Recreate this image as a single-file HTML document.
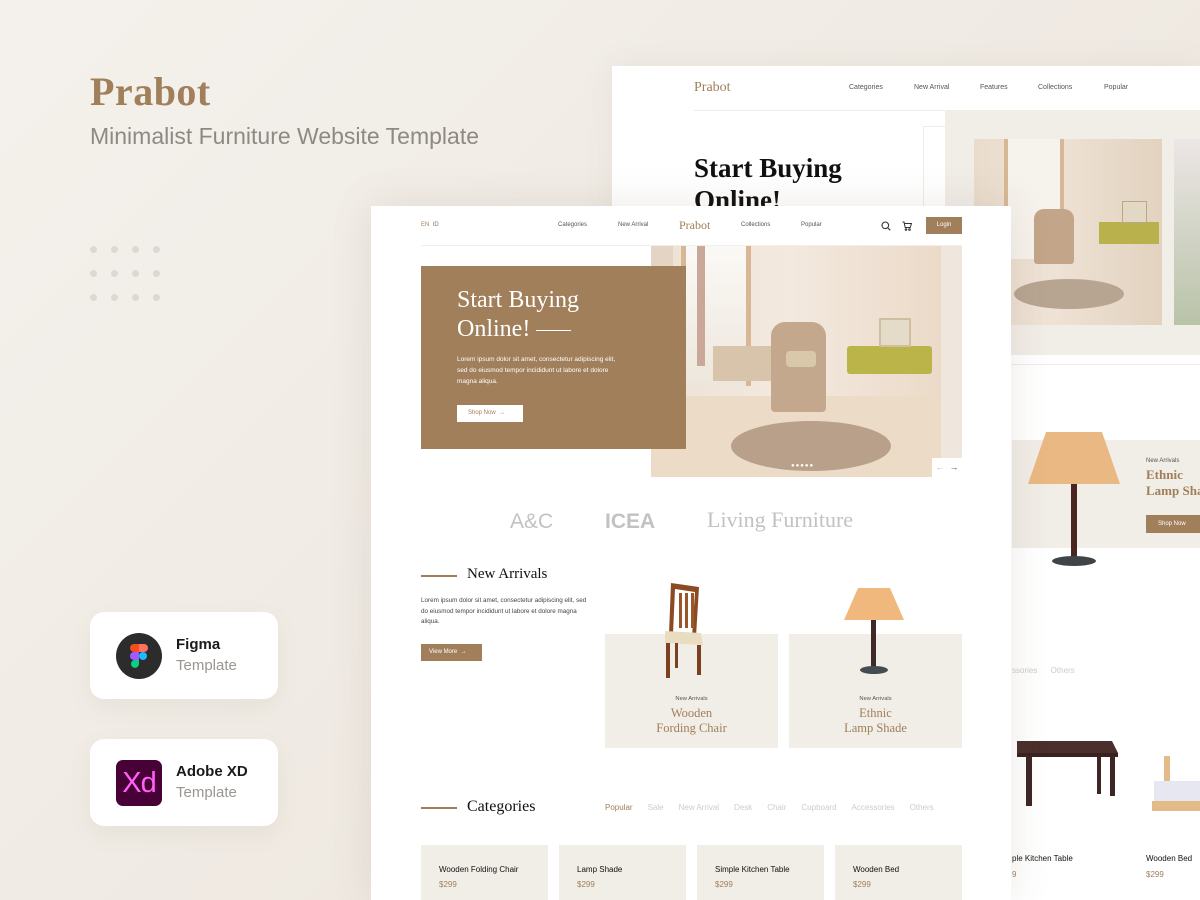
<!DOCTYPE html>
<html style="overflow:hidden;width:1200px;height:900px"><head><meta charset="utf-8"><style>
*{margin:0;padding:0;box-sizing:border-box}
body{width:1200px;height:900px;overflow:hidden;background:linear-gradient(135deg,#f4f1ec 0%,#efe9e2 60%,#ece5dc 100%);font-family:"Liberation Sans",sans-serif;position:relative}
.a{position:absolute}
.serif{font-family:"Liberation Serif",serif}
.br{color:#a07f5a}
.t{white-space:nowrap}
.dot{position:absolute;width:7px;height:7px;border-radius:50%;background:#e0d8cf}
.card{position:absolute;left:90px;width:188px;height:87px;background:#fff;border-radius:14px;box-shadow:0 8px 24px rgba(120,100,80,.08)}
.card b{position:absolute;left:86px;top:24px;font-size:15px;color:#1a1a1a}
.card span{position:absolute;left:86px;top:45px;font-size:15px;color:#9a9590}
.nav{font-size:7px;color:#555}
.tab{margin-right:15px}
</style></head><body>

<div class="a serif br t" style="left:90px;top:68px;font-size:40px;font-weight:bold;letter-spacing:.5px">Prabot</div>
<div class="a t" style="left:90px;top:123px;font-size:23px;color:#8e8983">Minimalist Furniture Website Template</div>

<div class="dot" style="left:90px;top:246px"></div><div class="dot" style="left:111px;top:246px"></div><div class="dot" style="left:132px;top:246px"></div><div class="dot" style="left:153px;top:246px"></div>
<div class="dot" style="left:90px;top:270px"></div><div class="dot" style="left:111px;top:270px"></div><div class="dot" style="left:132px;top:270px"></div><div class="dot" style="left:153px;top:270px"></div>
<div class="dot" style="left:90px;top:294px"></div><div class="dot" style="left:111px;top:294px"></div><div class="dot" style="left:132px;top:294px"></div><div class="dot" style="left:153px;top:294px"></div>

<div class="card" style="top:612px">
 <div class="a" style="left:26px;top:21px;width:46px;height:46px;border-radius:50%;background:#2c2c2c"></div>
 <svg class="a" style="left:38px;top:31px" width="22" height="27" viewBox="0 0 22 27"><path d="M6 1h5v8H6a4 4 0 010-8z" fill="#f24e1e"/><path d="M11 1h5a4 4 0 010 8h-5z" fill="#ff7262"/><path d="M6 9h5v8H6a4 4 0 010-8z" fill="#a259ff"/><circle cx="15" cy="13" r="4" fill="#1abcfe"/><path d="M6 17h5v4a4 4 0 11-5-4z" fill="#0acf83"/></svg>
 <b>Figma</b><span>Template</span>
</div>
<div class="card" style="top:739px">
 <div class="a" style="left:26px;top:21px;width:46px;height:46px;border-radius:7px;background:#470137;color:#ff61f6;font-size:29px;line-height:46px;text-align:center;letter-spacing:-1px">Xd</div>
 <b>Adobe XD</b><span>Template</span>
</div>

<!-- back page -->
<div class="a" style="left:612px;top:66px;width:588px;height:834px;background:#fff;box-shadow:0 0 30px rgba(120,100,80,.08);overflow:hidden">
 <div class="a serif br t" style="left:82px;top:14px;font-size:14px">Prabot</div>
 <div class="a nav t br" style="left:237px;top:18px">Categories</div>
 <div class="a nav t" style="left:302px;top:18px">New Arrival</div>
 <div class="a nav t" style="left:368px;top:18px">Features</div>
 <div class="a nav t" style="left:426px;top:18px">Collections</div>
 <div class="a nav t" style="left:492px;top:18px">Popular</div>
 <div class="a" style="left:82px;top:44px;width:520px;height:1px;background:#f0ece6"></div>
 <div class="a" style="left:311px;top:60px;width:30px;height:100px;border:1px solid #f0ece6"></div>
 <div class="a serif t" style="left:82px;top:86px;font-size:27px;color:#111;line-height:32px;font-weight:bold">Start Buying<br>Online!</div>
 <div class="a" style="left:333px;top:44px;width:270px;height:245px;background:#f1ede7"></div>
 <div class="a" style="left:362px;top:73px;width:188px;height:186px;background:linear-gradient(90deg,#e9dccd 0%,#efe3d6 40%,#e2d2bf 100%)">
  <div class="a" style="left:30px;top:0;width:60px;height:120px;background:#f6f2ec;border-left:4px solid #d7b896;border-right:4px solid #d7b896"></div>
  <div class="a" style="left:60px;top:70px;width:40px;height:55px;background:#c3a58a;border-radius:10px 10px 3px 3px"></div>
  <div class="a" style="left:125px;top:83px;width:60px;height:22px;background:#b9b24c"></div>
  <div class="a" style="left:148px;top:62px;width:25px;height:22px;background:#e3d8c4;border:1px solid #b8a888"></div>
  <div class="a" style="left:40px;top:140px;width:110px;height:30px;background:#b8a591;border-radius:50%"></div>
 </div>
 <div class="a" style="left:562px;top:73px;width:40px;height:186px;background:linear-gradient(#ece6e6,#b9c3a8)"></div>
 <div class="a" style="left:388px;top:298px;width:220px;height:1px;background:#f0ece6"></div>
 <div class="a" style="left:400px;top:374px;width:200px;height:108px;background:#f1ede7"></div>
 <svg class="a" style="left:414px;top:364px" width="96" height="140" viewBox="0 0 96 140"><path d="M20 2h56l18 52H2z" fill="#eab983"/><rect x="45" y="54" width="6" height="75" fill="#4a2620"/><ellipse cx="48" cy="131" rx="22" ry="5" fill="#3e4448"/></svg>
 <div class="a nav t" style="left:534px;top:392px;font-size:6px">New Arrivals</div>
 <div class="a serif br t" style="left:534px;top:401px;font-size:13px;line-height:16px;font-weight:bold">Ethnic<br>Lamp Shade</div>
 <div class="a t" style="left:534px;top:449px;width:60px;height:18px;background:#a07f5a;color:#fff;font-size:6px;line-height:18px;padding-left:12px">Shop Now</div>
 <div class="a t" style="left:400px;top:600px;font-size:8px;color:#ccc">ssories&nbsp;&nbsp;&nbsp;&nbsp;&nbsp;&nbsp;Others</div>
 <svg class="a" style="left:400px;top:670px" width="110" height="75" viewBox="0 0 110 75"><path d="M5 5h95l6 12H5z" fill="#4a2f2c"/><path d="M5 17h101v4H5z" fill="#3a2220"/><rect x="14" y="20" width="6" height="50" fill="#3e2624"/><rect x="98" y="20" width="5" height="40" fill="#3e2624"/><rect x="85" y="20" width="4" height="38" fill="#3e2624"/></svg>
 <svg class="a" style="left:540px;top:690px" width="60" height="60" viewBox="0 0 60 60"><rect x="12" y="0" width="6" height="55" fill="#e3bb88"/><path d="M2 25h58v20H2z" fill="#e6e7f1"/><rect x="0" y="45" width="60" height="10" fill="#e3bb88"/></svg>
 <div class="a t" style="left:400px;top:788px;font-size:8px;color:#111">ple Kitchen Table</div>
 <div class="a t br" style="left:400px;top:804px;font-size:8px">9</div>
 <div class="a t" style="left:534px;top:788px;font-size:8px;color:#111">Wooden Bed</div>
 <div class="a t br" style="left:534px;top:804px;font-size:8px">$299</div>
</div>

<!-- front page -->
<div class="a" style="left:371px;top:206px;width:640px;height:694px;background:#fff;box-shadow:0 0 40px rgba(100,80,60,.12);overflow:hidden">
 <div class="a t" style="left:50px;top:16px;font-size:6px;color:#777"><span class="br">EN</span>&nbsp; ID</div>
 <div class="a nav t br" style="left:187px;top:16px;font-size:6px">Categories</div>
 <div class="a nav t" style="left:247px;top:16px;font-size:6px">New Arrival</div>
 <div class="a serif br t" style="left:308px;top:12px;font-size:12px">Prabot</div>
 <div class="a nav t" style="left:370px;top:16px;font-size:6px">Collections</div>
 <div class="a nav t" style="left:430px;top:16px;font-size:6px">Popular</div>
 <svg class="a" style="left:510px;top:15px" width="10" height="10" viewBox="0 0 10 10" fill="none" stroke="#333" stroke-width="1.1"><circle cx="4.3" cy="4.3" r="3.3"/><path d="M6.8 6.8L9.3 9.3"/></svg>
 <svg class="a" style="left:531px;top:15px" width="10" height="10" viewBox="0 0 10 10" fill="none" stroke="#333" stroke-width="1"><path d="M.5 1h1.5l1.2 5.5h5L9.5 2.5H2.5"/><circle cx="4" cy="8.5" r=".8"/><circle cx="7.5" cy="8.5" r=".8"/></svg>
 <div class="a t" style="left:555px;top:11px;width:36px;height:17px;background:#a07f5a;color:#fff;font-size:6px;line-height:17px;text-align:center">Login</div>
 <div class="a" style="left:50px;top:39px;width:541px;height:1px;background:#f2eee9"></div>

 <div class="a" style="left:280px;top:40px;width:311px;height:231px;background:linear-gradient(90deg,#eee2d5 0%,#f3e9df 45%,#ead8c5 100%);overflow:hidden">
  <div class="a" style="left:30px;top:0;width:70px;height:140px;background:linear-gradient(#fbf9f6,#ede6dc);border-left:5px solid #d8b894;border-right:5px solid #d8b894"></div>
  <div class="a" style="left:46px;top:0;width:8px;height:120px;background:#c9a89a"></div>
  <div class="a" style="left:0;top:0;width:22px;height:231px;background:#e4d4c4"></div>
  <div class="a" style="left:62px;top:100px;width:100px;height:35px;background:#d8c4ab"></div>
  <div class="a" style="left:0;top:150px;width:311px;height:81px;background:#ecdcc7"></div>
  <div class="a" style="left:120px;top:76px;width:55px;height:90px;background:#c4a88e;border-radius:14px 14px 4px 4px"></div>
  <div class="a" style="left:135px;top:105px;width:30px;height:16px;background:#d9c9aa;border-radius:4px"></div>
  <div class="a" style="left:196px;top:100px;width:85px;height:28px;background:#bab449;border-radius:3px"></div>
  <div class="a" style="left:228px;top:72px;width:32px;height:29px;background:#e4dcc8;border:2px solid #cfbea0"></div>
  <div class="a" style="left:80px;top:175px;width:160px;height:50px;background:#b8a08a;border-radius:50%"></div>
  <div class="a" style="left:290px;top:0;width:21px;height:231px;background:#efe6dd"></div>
 </div>
 <div class="a" style="left:50px;top:60px;width:265px;height:183px;background:#a07f5a">
  <div class="a serif t" style="left:36px;top:20px;font-size:24px;line-height:29px;color:#fff">Start Buying<br>Online! <span style="display:inline-block;width:35px;height:1px;background:#fff;vertical-align:middle"></span></div>
  <div class="a" style="left:36px;top:88px;font-size:6.5px;line-height:11px;color:#fff;width:165px">Lorem ipsum dolor sit amet, consectetur adipiscing elit, sed do eiusmod tempor incididunt ut labore et dolore magna aliqua.</div>
  <div class="a t" style="left:36px;top:139px;width:66px;height:17px;background:#fff;color:#a07f5a;font-size:6px;line-height:17px;padding-left:11px">Shop Now &nbsp;→</div>
 </div>
 <div class="a" style="left:561px;top:252px;width:30px;height:19px;background:#fff;font-size:9px;line-height:19px;color:#555;text-align:center"><span style="color:#bbb">←</span> &nbsp;→</div>
 <div class="a t" style="left:420px;top:257px;font-size:6px;color:#fff;letter-spacing:1px">●●●●●</div>

 <div class="a t" style="left:139px;top:304px;font-size:21px;color:#c2c2c2">A&amp;C</div>
 <div class="a t" style="left:234px;top:304px;font-size:21px;color:#c2c2c2;font-weight:bold">ICEA</div>
 <div class="a serif t" style="left:336px;top:301px;font-size:22px;color:#c2c2c2">Living Furniture</div>

 <div class="a" style="left:50px;top:369px;width:36px;height:2px;background:#a07f5a"></div>
 <div class="a serif t" style="left:96px;top:360px;font-size:15px;color:#111">New Arrivals</div>
 <div class="a" style="left:50px;top:390px;width:168px;font-size:6.3px;line-height:10.7px;color:#444">Lorem ipsum dolor sit amet, consectetur adipiscing elit, sed do eiusmod tempor incididunt ut labore et dolore magna aliqua.</div>
 <div class="a t" style="left:50px;top:438px;width:61px;height:17px;background:#a07f5a;color:#fff;font-size:6px;line-height:17px;padding-left:8px">View More &nbsp;→</div>

 <div class="a" style="left:234px;top:428px;width:173px;height:114px;background:#f1ede7"></div>
 <div class="a" style="left:418px;top:428px;width:173px;height:114px;background:#f1ede7"></div>
 <svg class="a" style="left:290px;top:375px" width="60" height="100" viewBox="0 0 60 100"><path d="M10 2l28 4-3 50-4 0 3-45-20-3-2 45-4 0z" fill="#8c4a22"/><path d="M18 12h3v35h-3zM24 12h3v35h-3zM30 12h3v35h-3z" fill="#9a5628"/><path d="M4 50l36 2 2 12-38-2z" fill="#e9dcc0"/><path d="M5 62h4v35H5zM36 64h4v30h-4zM14 62h3v25h-3z" fill="#7a4020"/></svg>
 <svg class="a" style="left:472px;top:380px" width="62" height="92" viewBox="0 0 62 92"><path d="M15 2h32l14 32H1z" fill="#f0b87d"/><rect x="28" y="34" width="5" height="48" fill="#3e2a28"/><ellipse cx="31" cy="84" rx="14" ry="4" fill="#444c50"/></svg>
 <div class="a t" style="left:234px;top:490px;width:173px;text-align:center;font-size:5.8px;color:#555">New Arrivals</div>
 <div class="a serif br" style="left:234px;top:500px;width:173px;text-align:center;font-size:12.5px;line-height:15px">Wooden<br>Fording Chair</div>
 <div class="a t" style="left:418px;top:490px;width:173px;text-align:center;font-size:5.8px;color:#555">New Arrivals</div>
 <div class="a serif br" style="left:418px;top:500px;width:173px;text-align:center;font-size:12.5px;line-height:15px">Ethnic<br>Lamp Shade</div>

 <div class="a" style="left:50px;top:601px;width:36px;height:2px;background:#a07f5a"></div>
 <div class="a serif t" style="left:96px;top:592px;font-size:16px;color:#111">Categories</div>
 <div class="a t" style="left:234px;top:597px;font-size:8px;color:#ccc"><span class="tab br">Popular</span><span class="tab">Sale</span><span class="tab">New Arrival</span><span class="tab">Desk</span><span class="tab">Chair</span><span class="tab">Cupboard</span><span class="tab">Accessories</span><span>Others</span></div>

 <div class="a" style="left:50px;top:639px;width:127px;height:70px;background:#f1ede7"><div class="a t" style="left:18px;top:20px;font-size:8px;color:#111">Wooden Folding Chair</div><div class="a t br" style="left:18px;top:35px;font-size:8px">$299</div></div>
 <div class="a" style="left:188px;top:639px;width:127px;height:70px;background:#f1ede7"><div class="a t" style="left:18px;top:20px;font-size:8px;color:#111">Lamp Shade</div><div class="a t br" style="left:18px;top:35px;font-size:8px">$299</div></div>
 <div class="a" style="left:326px;top:639px;width:127px;height:70px;background:#f1ede7"><div class="a t" style="left:18px;top:20px;font-size:8px;color:#111">Simple Kitchen Table</div><div class="a t br" style="left:18px;top:35px;font-size:8px">$299</div></div>
 <div class="a" style="left:464px;top:639px;width:127px;height:70px;background:#f1ede7"><div class="a t" style="left:18px;top:20px;font-size:8px;color:#111">Wooden Bed</div><div class="a t br" style="left:18px;top:35px;font-size:8px">$299</div></div>
</div>
</body></html>
